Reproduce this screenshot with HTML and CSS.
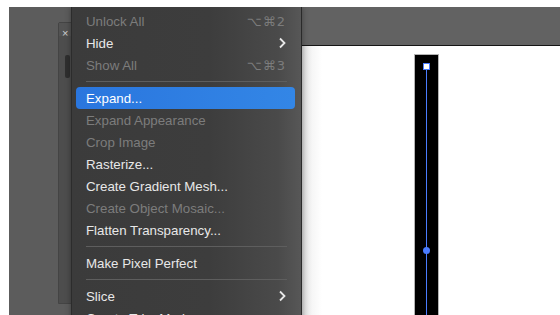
FILE: index.html
```html
<!DOCTYPE html>
<html lang="en">
<head>
<meta charset="UTF-8">
<meta name="viewport" content="width=device-width, initial-scale=1.0">
<link rel="stylesheet" href="styles.css">
</head>
<body>

<div class="top-strip"></div>

<div class="workspace">
  <div class="gutter"></div>

  <!-- left dock with a floating panel behind the menu -->
  <div class="dock">
    <div class="panel">
      <div class="panel-head"><span class="panel-close">×</span></div>
      <div class="panel-grip"></div>
    </div>
  </div>

  <!-- document window -->
  <div class="doc">
    <div class="doc-bar"></div>
    <div class="doc-canvas">
      <div class="artboard">
        <div class="path-line"></div>
        <div class="anchor-square"></div>
        <div class="anchor-dot"></div>
      </div>
    </div>
  </div>

  <!-- Object menu dropdown -->
  <div class="menu">
    <div class="item disabled"><span>Unlock All</span><span class="key">⌥⌘2</span></div>
    <div class="item"><span>Hide</span><svg class="chev" viewBox="0 0 8 12"><path d="M2 1.5l4.5 4.5-4.5 4.5"/></svg></div>
    <div class="item disabled"><span>Show All</span><span class="key">⌥⌘3</span></div>
    <div class="sep"></div>
    <div class="item active"><span>Expand...</span></div>
    <div class="item disabled"><span>Expand Appearance</span></div>
    <div class="item disabled"><span>Crop Image</span></div>
    <div class="item"><span>Rasterize...</span></div>
    <div class="item"><span>Create Gradient Mesh...</span></div>
    <div class="item disabled"><span>Create Object Mosaic...</span></div>
    <div class="item"><span>Flatten Transparency...</span></div>
    <div class="sep"></div>
    <div class="item"><span>Make Pixel Perfect</span></div>
    <div class="sep"></div>
    <div class="item"><span>Slice</span><svg class="chev" viewBox="0 0 8 12"><path d="M2 1.5l4.5 4.5-4.5 4.5"/></svg></div>
    <div class="item"><span>Create Trim Marks</span></div>
  </div>
</div>

</body>
</html>
```

FILE: styles.css
```css
html, body {
  margin: 0;
  padding: 0;
  height: 100%;
  overflow: hidden;
  background: #ffffff;
  font-family: "Liberation Sans", Arial, sans-serif;
}
.top-strip {
  height: 7px;
  background: #ffffff;
}
.workspace {
  position: relative;
  display: flex;
  height: 308px;
  overflow: hidden;
}
.gutter {
  width: 9px;
  background: #ffffff;
}
.dock {
  width: 293px;
  background: #5c5c5c;
  padding: 15px 0 0 49px;
  box-sizing: border-box;
}
.panel {
  width: 40px;
  height: 280px;
  background: #4d4d4d;
  border: 1px solid #444;
  border-radius: 2px 0 0 0;
}
.panel-head {
  height: 13px;
  background: #535353;
  padding-left: 3px;
}
.panel-close {
  color: #cfcfcf;
  font-size: 11px;
  line-height: 13px;
}
.panel-grip {
  width: 5px;
  height: 23px;
  margin: 19px 0 0 6px;
  background: #2f2f2f;
  border-radius: 2px;
}
.doc {
  flex: 1;
  display: flex;
  flex-direction: column;
  min-height: 0;
}
.doc-bar {
  flex-shrink: 0;
  height: 38px;
  background: #626262;
  border-bottom: 1px solid #151515;
}
.doc-canvas {
  flex: 1;
  min-height: 0;
  overflow: hidden;
  background: linear-gradient(to right, #d8d8d8 0, #f6f6f6 10px, #ffffff 20px);
  padding: 8px 0 0 112px;
}
.artboard {
  position: relative;
  width: 23px;
  height: 270px;
  background: #000000;
  border: 1px solid #b4b4b4;
  border-bottom: none;
}
.path-line {
  position: absolute;
  left: 11px;
  top: 12px;
  bottom: 0;
  width: 1px;
  background: #4a7cff;
}
.anchor-square {
  position: absolute;
  left: 8px;
  top: 8px;
  width: 5px;
  height: 5px;
  background: #ffffff;
  border: 1px solid #4a7cff;
}
.anchor-dot {
  position: absolute;
  left: 8px;
  top: 192px;
  width: 7px;
  height: 7px;
  border-radius: 50%;
  background: #4a7cff;
}
.menu {
  position: absolute;
  left: 71px;
  top: 0;
  width: 231px;
  height: 330px;
  box-sizing: border-box;
  padding: 3px 6px 0 4px;
  background: linear-gradient(to right, #3b3b3b 0, #3d3d3d 60%, #4a4a4a 90%, #575757 100%);
  border-left: 1px solid #2c2c2c;
  border-right: 1px solid #2a2a2a;
  box-shadow: 0 0 6px rgba(0, 0, 0, 0.35);
}
.item {
  display: flex;
  align-items: center;
  justify-content: space-between;
  height: 22px;
  padding: 0 9px 0 10px;
  color: #e8e8e8;
  font-size: 13.3px;
  border-radius: 4px;
}
.item.disabled {
  color: #7c7c7c;
}
.item.active {
  background: linear-gradient(to right, #2a76de, #3386e6);
  color: #ffffff;
}
.key {
  font-family: "DejaVu Sans", sans-serif;
  font-size: 13px;
  letter-spacing: 1px;
}
.chev {
  width: 8px;
  height: 12px;
  fill: none;
  stroke: #e8e8e8;
  stroke-width: 1.8;
}
.sep {
  height: 1px;
  margin: 5px 8px 5px 10px;
  background: #5e5e5e;
}
```
